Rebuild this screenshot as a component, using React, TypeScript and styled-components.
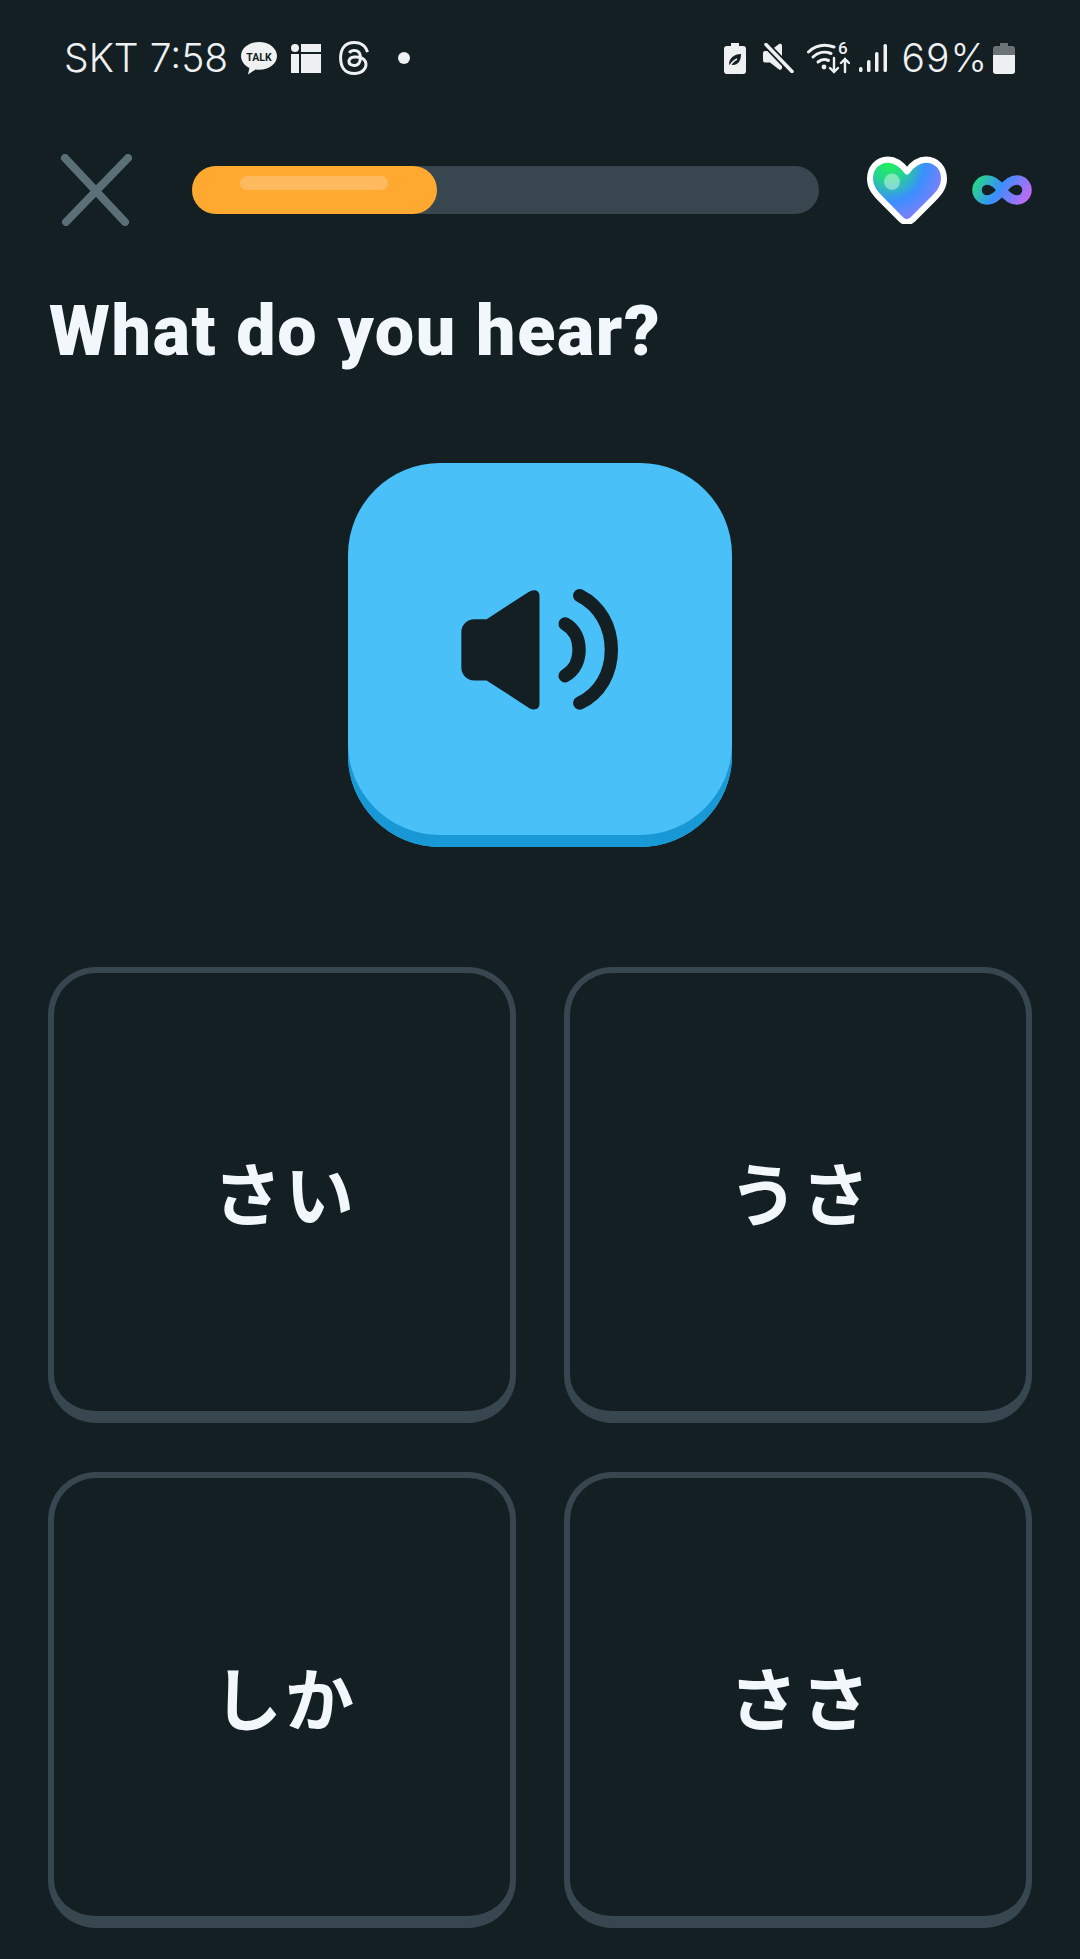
import React from 'react';
import styled, { createGlobalStyle } from 'styled-components';
import { SiThreads } from 'react-icons/si';

const GlobalStyle = createGlobalStyle`
	html, body {
		margin: 0;
		padding: 0;
		background: #141f23;
	}
`;

const Page = styled.div`
	width: 1080px;
	height: 1959px;
	overflow: hidden;
	background: #141f23;
	font-family: 'Noto Sans', sans-serif;
`;

const StatusBar = styled.div`
	height: 116px;
	display: flex;
	align-items: center;
	justify-content: space-between;
	padding: 0 65px 0 64px;
	color: #eef0f1;
	font-family: Inter, Roboto, sans-serif;
	font-weight: 300;
	font-size: 39px;
`;

const StatusGroup = styled.div`
	display: flex;
	align-items: center;
`;

const StatusText = styled.span<{ $gap?: number; $spacing?: number }>`
	margin-right: ${(p) => p.$gap ?? 0}px;
	letter-spacing: ${(p) => p.$spacing ?? 0}px;
	line-height: 48px;
	white-space: nowrap;
`;

const StatusIcon = styled.svg<{ $gap?: number }>`
	display: block;
	flex: none;
	margin-right: ${(p) => p.$gap ?? 0}px;
`;

const ThreadsIcon = styled(SiThreads)`
	display: block;
	flex: none;
	width: 34px;
	height: 36px;
	margin-right: 27px;
	color: #eef0f1;
`;

const NotifDot = styled.span`
	width: 12px;
	height: 12px;
	border-radius: 50%;
	background: #eef0f1;
`;

const TopBar = styled.div`
	display: flex;
	align-items: center;
	height: 96px;
	margin-top: 26px;
	padding: 0 48px 0 60px;
`;

const CloseIcon = styled.svg`
	display: block;
	flex: none;
	margin-right: 60px;
`;

const Track = styled.div`
	width: 627px;
	height: 48px;
	flex: none;
	border-radius: 24px;
	background: #37464f;
	margin-right: 48px;
`;

const Fill = styled.div`
	position: relative;
	height: 48px;
	border-radius: 24px;
	background: #ffa931;
`;

const Shine = styled.div`
	position: absolute;
	left: 48px;
	top: 10px;
	width: 148px;
	height: 14px;
	border-radius: 7px;
	background: #ffb95f;
`;

const HeartIcon = styled.svg`
	display: block;
	flex: none;
	margin-right: 25px;
`;

const LoopIcon = styled.svg`
	display: block;
	flex: none;
`;

const SpeakerIcon = styled.svg`
	display: block;
`;

const Title = styled.h1`
	margin: 52px 0 0 49px;
	color: #f1f7fb;
	font-family: Roboto, 'Noto Sans', sans-serif;
	font-weight: 900;
	font-size: 70px;
	line-height: 82px;
	letter-spacing: 1.65px;
`;

const SpeakerRow = styled.div`
	display: flex;
	justify-content: center;
	margin-top: 91px;
`;

const SpeakerButton = styled.button`
	width: 384px;
	height: 384px;
	box-sizing: border-box;
	padding: 0 0 12px;
	border: none;
	border-radius: 92px;
	background: #49c0f8;
	box-shadow: inset 0 -12px 0 #1899d6;
	display: flex;
	align-items: center;
	justify-content: center;
`;

const Choices = styled.div`
	display: grid;
	grid-template-columns: repeat(2, 468px);
	grid-auto-rows: 456px;
	column-gap: 48px;
	row-gap: 49px;
	margin: 120px 0 0 48px;
`;

const Choice = styled.button`
	box-sizing: border-box;
	padding: 0 0 2px 6px;
	border: 6px solid #37464f;
	border-bottom-width: 12px;
	border-radius: 48px;
	background: transparent;
	color: #f1f7fb;
	font-family: 'Noto Sans CJK JP', sans-serif;
	font-weight: 700;
	font-size: 69px;
	line-height: 1;
	letter-spacing: 3px;
	display: flex;
	align-items: center;
	justify-content: center;
`;

const choices = ['さい', 'うさ', 'しか', 'ささ'];

export default function App() {
	return (
		<Page>
			<GlobalStyle />
			<StatusBar>
				<StatusGroup>
					<StatusText $gap={12}>SKT 7:58</StatusText>
					<StatusIcon $gap={13} width="38" height="34" viewBox="0 0 38 34">
						<path d="M19 1C9 1 1 7 1 15c0 5 3.400 9.400 8.400 12l-1.400 6.500 7.500-5c1.200.2 2.400.3 3.500.3 10 0 18-6 18-13.800S29 1 19 1z" fill="#eef0f1" />
						<text x="19" y="19.500" textAnchor="middle" fontFamily="Roboto, sans-serif" fontWeight="700" fontSize="10.500" fill="#141f23">TALK</text>
					</StatusIcon>
					<StatusIcon $gap={16} width="30" height="30" viewBox="0 0 30 30">
						<circle cx="4" cy="5" r="4" fill="#eef0f1" />
						<rect x="10" y="1" width="20" height="8" fill="#eef0f1" />
						<rect x="0" y="11" width="8" height="19" fill="#eef0f1" />
						<rect x="10" y="11" width="20" height="19" fill="#eef0f1" />
					</StatusIcon>
					<ThreadsIcon />
					<NotifDot />
				</StatusGroup>
				<StatusGroup>
					<StatusIcon $gap={17} width="22" height="31" viewBox="0 0 22 31">
						<path d="M7 0h8v3h4a3 3 0 0 1 3 3v22a3 3 0 0 1-3 3H3a3 3 0 0 1-3-3V6a3 3 0 0 1 3-3h4z" fill="#eef0f1" />
						<path d="M5 22c0-7 5-11 12-11 0 7-3 11-8 11-1 0-2-.3-2.500-.8" fill="#141f23" />
						<path d="M5 25c1.500-4 4-7 8-9" stroke="#eef0f1" strokeWidth="1.500" fill="none" />
					</StatusIcon>
					<StatusIcon $gap={13} width="31" height="30" viewBox="0 0 31 30">
						<path d="M0 10a2 2 0 0 1 2-2h5l9-7c1-.7 3 0 3 1.500V25c0 1.500-2 2.200-3 1.500l-9-7H2a2 2 0 0 1-2-2z" fill="#eef0f1" />
						<path d="M3 1.500l26 27" stroke="#141f23" strokeWidth="7" />
						<path d="M3 1.500l26 27" stroke="#eef0f1" strokeWidth="3.500" strokeLinecap="round" />
					</StatusIcon>
					<StatusIcon $gap={9} width="43" height="42" viewBox="0 -4 43 42" fill="none" stroke="#eef0f1" strokeLinecap="round">
						<path d="M1.500 11C9 4 18 3 27 6" strokeWidth="3" />
						<path d="M6 16c5-5 12-6 18-3.500" strokeWidth="3" />
						<path d="M11 21c3-2.500 7-3 10.500-1.500" strokeWidth="3" />
						<circle cx="17" cy="26" r="2.400" fill="#eef0f1" stroke="none" />
						<text x="31" y="13" fontFamily="Roboto, sans-serif" fontSize="17" fontWeight="500" fill="#eef0f1" stroke="none">6</text>
						<path d="M27 17v14m-4-4l4 4 4-4M38 31V18m-4 4l4-4 4 4" strokeWidth="2.400" />
					</StatusIcon>
					<StatusIcon $gap={15} width="28" height="30" viewBox="0 0 28 30" fill="#eef0f1">
						<rect x="0" y="24" width="3.500" height="5" rx="1.500" />
						<rect x="8" y="17" width="3.500" height="12" rx="1.500" />
						<rect x="16" y="9" width="3.500" height="20" rx="1.500" />
						<rect x="24.500" y="1" width="3.500" height="28" rx="1.500" />
					</StatusIcon>
					<StatusText $gap={5} $spacing={1}>69%</StatusText>
					<StatusIcon width="22" height="31" viewBox="0 0 22 31">
						<path d="M7 0h8v3h4a3 3 0 0 1 3 3v6H0V6a3 3 0 0 1 3-3h4z" fill="#6b7376" />
						<path d="M0 12h22v16a3 3 0 0 1-3 3H3a3 3 0 0 1-3-3z" fill="#eef0f1" />
					</StatusIcon>
				</StatusGroup>
			</StatusBar>
			<TopBar>
				<CloseIcon width="72" height="72" viewBox="0 0 72 72" fill="none" stroke="#5b6f76" strokeWidth="8" strokeLinecap="round">
					<path d="M5 4l60 64M68 4L6 68" />
				</CloseIcon>
				<Track>
					<Fill style={{ width: `${(245 / 627) * 100}%` }}>
						<Shine />
					</Fill>
				</Track>
				<HeartIcon width="80" height="68" viewBox="0 0 80 66" preserveAspectRatio="none">
					<defs>
						<radialGradient id="heartFill" gradientUnits="userSpaceOnUse" cx="22" cy="8" r="72">
							<stop offset="0" stopColor="#22f05a" />
							<stop offset="0.22" stopColor="#25d58e" />
							<stop offset="0.5" stopColor="#3a8fff" />
							<stop offset="0.72" stopColor="#6f82fb" />
							<stop offset="1" stopColor="#d264f2" />
						</radialGradient>
					</defs>
					<path
						d="M40 15C34 7 28 3.500 21 3.500 10 3.500 3 12 3 22c0 8 4 13 11 20l20 19.500c3.500 3.300 8.500 3.300 12 0L66 42c7-7 11-12 11-20 0-10-7-18.500-18-18.500-7 0-13 3.500-19 11.500z"
						fill="url(#heartFill)"
						stroke="#fff"
						strokeWidth="6"
						strokeLinejoin="round"
					/>
					<circle cx="25" cy="25" r="8" fill="#fff" fillOpacity="0.42" />
				</HeartIcon>
				<LoopIcon width="60" height="30" viewBox="0 0 60 30">
					<defs>
						<linearGradient id="loopStroke" gradientUnits="userSpaceOnUse" x1="4" y1="0" x2="56" y2="30">
							<stop offset="0" stopColor="#25dc7c" />
							<stop offset="0.45" stopColor="#3a8fff" />
							<stop offset="1" stopColor="#cf65f2" />
						</linearGradient>
					</defs>
					<path
						d="M30 15C25 8 20 5 15 5 9 5 5 10 5 15s4 10 10 10c5 0 10-3 15-10 5-7 10-10 15-10 6 0 10 5 10 10s-4 10-10 10c-5 0-10-3-15-10z"
						fill="none"
						stroke="url(#loopStroke)"
						strokeWidth="9.500"
					/>
				</LoopIcon>
			</TopBar>
			<Title>What do you hear?</Title>
			<SpeakerRow>
				<SpeakerButton>
					<SpeakerIcon width="158" height="122" viewBox="360 415 475 365">
						<path
							d="M400 508H437L562 427C578 416 596 420 596 438V762C596 780 578 784 562 773L437 692H400C378 692 361 675 361 653V547C361 525 378 508 400 508Z"
							fill="#141f23"
						/>
						<path d="M673 522C702 538 715 568 715 600S702 662 673 678" fill="none" stroke="#141f23" strokeWidth="40" strokeLinecap="round" />
						<path d="M717 437C778 468 812 530 812 600S778 732 717 760" fill="none" stroke="#141f23" strokeWidth="40" strokeLinecap="round" />
					</SpeakerIcon>
				</SpeakerButton>
			</SpeakerRow>
			<Choices>
				{choices.map((label) => (
					<Choice key={label}>{label}</Choice>
				))}
			</Choices>
		</Page>
	);
}
